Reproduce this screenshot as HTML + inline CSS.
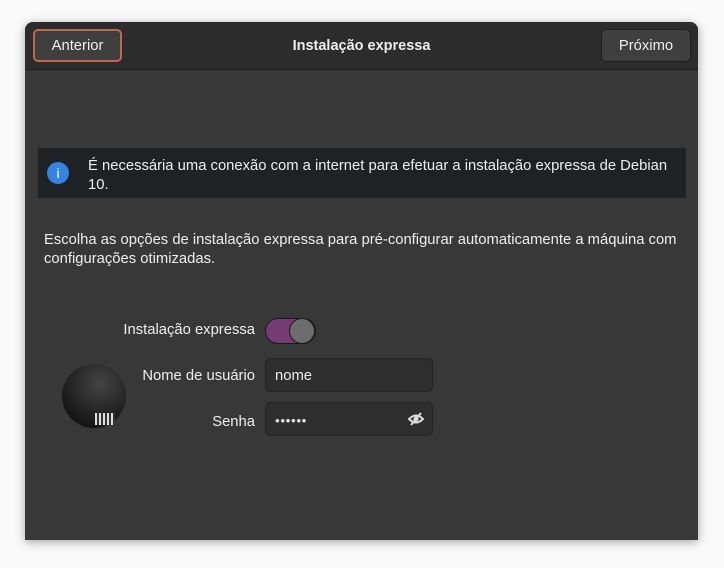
<!DOCTYPE html>
<html><head><style>
body{margin:0;width:724px;height:568px;background:#fafafa;font-family:"Liberation Sans",sans-serif;font-size:14.8px;color:#eee;position:relative;overflow:hidden}
.win{position:absolute;left:25px;top:22px;width:673px;height:518px;background:#383838;border-radius:8px 8px 0 0;box-shadow:0 2px 10px rgba(0,0,0,.35);overflow:hidden}
.hdr{position:absolute;left:0;top:0;width:673px;height:47px;background:#2c2c2c;border-bottom:1px solid #1e1e1e}
.btn{position:absolute;top:7px;height:33px;border-radius:5px;background:#3f3f3f;border:1px solid #1e1e1e;box-sizing:border-box;display:flex;align-items:center;justify-content:center;font-size:14.8px;color:#eee}
.t{position:absolute;white-space:nowrap;line-height:17px}
.info{position:absolute;left:13px;top:126px;width:648px;height:50px;background:#1f2225}
.entry{position:absolute;left:240px;width:168px;height:34px;background:#2e2e2e;border:1px solid #232323;border-radius:5px;box-sizing:border-box}
</style></head><body>
<div class="win">
<div class="hdr">
<div class="btn" style="left:8px;width:89px;border:2px solid #c0684a">Anterior</div>
<div class="t" style="left:0;width:673px;text-align:center;top:16px;font-weight:bold;font-size:14.5px">Instalação expressa</div>
<div class="btn" style="left:576px;width:90px">Próximo</div>
</div>
<div class="info">
<div style="position:absolute;left:9px;top:14px;width:22px;height:22px;border-radius:50%;background:#3584e4;color:#fff;text-align:center;line-height:22px;font-size:14px">i</div>
<div class="t" style="left:50px;top:9px;line-height:19px">É necessária uma conexão com a internet para efetuar a instalação expressa de Debian<br>10.</div>
</div>
<div class="t" style="left:19px;top:209px;line-height:19px">Escolha as opções de instalação expressa para pré-configurar automaticamente a máquina com<br>configurações otimizadas.</div>
<div class="t" style="left:0;width:230px;text-align:right;top:300px">Instalação expressa</div>
<div style="position:absolute;left:240px;top:296px;width:49px;height:24px;border-radius:13px;background:#773b74;border:1px solid #1a1a1a"></div>
<div style="position:absolute;left:264px;top:296px;width:24px;height:24px;border-radius:50%;background:#6d6d6d;border:1px solid #1a1a1a"></div>
<div style="position:absolute;left:37px;top:342px;width:64px;height:64px;border-radius:50%;background:radial-gradient(circle at 60% 30%,#444,#151515 75%)"></div>
<div style="position:absolute;left:70px;top:391px;width:20px;height:12px;background:repeating-linear-gradient(90deg,#ddd 0 2px,#333 2px 4px)"></div>
<div class="t" style="left:0;width:230px;text-align:right;top:346px">Nome de usuário</div>
<div class="entry" style="top:336px"><span class="t" style="left:9px;top:9px">nome</span></div>
<div class="t" style="left:0;width:230px;text-align:right;top:392px">Senha</div>
<div class="entry" style="top:380px"><span class="t" style="left:9px;top:9px;font-size:8px;letter-spacing:0.5px">●●●●●●</span>
<svg style="position:absolute;left:142px;top:9px" width="16" height="14" viewBox="0 0 16 14"><path d="M1 7Q8 0 15 7Q8 14 1 7Z" fill="none" stroke="#ddd" stroke-width="2"/><circle cx="8" cy="7" r="2.5" fill="#ddd"/><path d="M3 13L13 1" stroke="#ddd" stroke-width="2"/></svg></div>
</div>
</body></html>
